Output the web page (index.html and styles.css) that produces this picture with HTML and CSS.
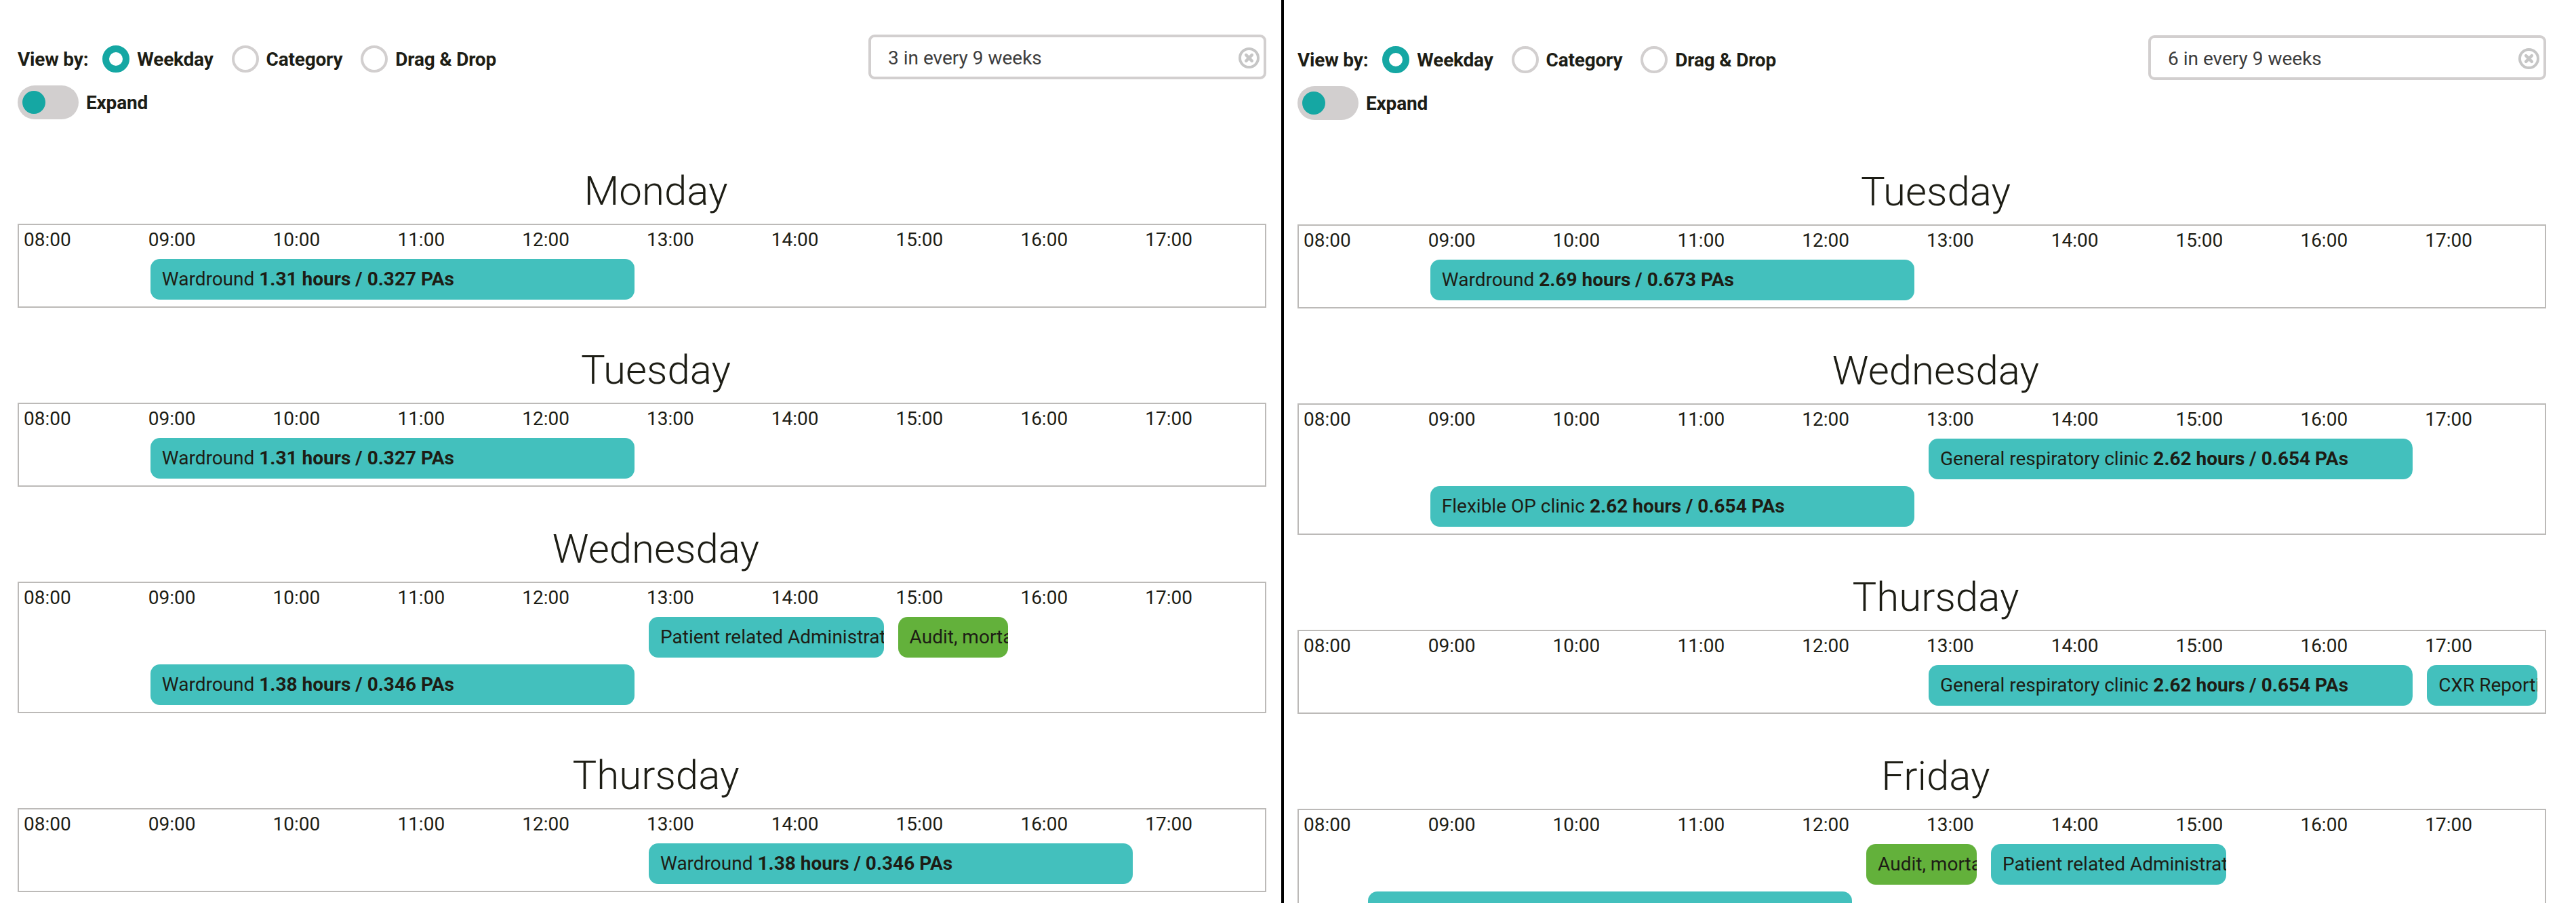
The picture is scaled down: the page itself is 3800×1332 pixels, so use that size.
FILE: index.html
```html
<!DOCTYPE html>
<html lang="en">
<head>
<meta charset="utf-8">
<title>Job plan – weekday view</title>
<link rel="stylesheet" href="styles.css">
</head>
<body>
<div class="page">
  <section class="panel panel-left">
    <div class="panel-inner">
      <header class="toolbar">
        <div class="controls">
          <div class="viewby">
            <span class="viewby-label">View by:</span>
            <label class="radio"><span class="radio-dot checked"></span><span>Weekday</span></label>
            <label class="radio"><span class="radio-dot"></span><span>Category</span></label>
            <label class="radio"><span class="radio-dot"></span><span>Drag &amp; Drop</span></label>
          </div>
          <div class="expand">
            <span class="toggle"><span class="knob"></span></span>
            <span class="expand-label">Expand</span>
          </div>
        </div>
        <div class="search">
          <span class="search-text">3 in every 9 weeks</span>
          <svg class="clear" viewBox="0 0 31 31" width="31" height="31"><circle cx="15.5" cy="15.5" r="13.5"/><path d="M11.2 11.2 L19.8 19.8 M19.8 11.2 L11.2 19.8"/></svg>
        </div>
      </header>

      <div class="day">
        <h2 class="day-title">Monday</h2>
        <div class="timeline">
          <div class="hour">08:00</div><div class="hour">09:00</div><div class="hour">10:00</div><div class="hour">11:00</div><div class="hour">12:00</div><div class="hour">13:00</div><div class="hour">14:00</div><div class="hour">15:00</div><div class="hour">16:00</div><div class="hour">17:00</div>
          <div class="event teal" style="grid-column: 3 / 11; grid-row: 2;">Wardround <b>1.31 hours / 0.327 PAs</b></div>
        </div>
      </div>

      <div class="day">
        <h2 class="day-title">Tuesday</h2>
        <div class="timeline">
          <div class="hour">08:00</div><div class="hour">09:00</div><div class="hour">10:00</div><div class="hour">11:00</div><div class="hour">12:00</div><div class="hour">13:00</div><div class="hour">14:00</div><div class="hour">15:00</div><div class="hour">16:00</div><div class="hour">17:00</div>
          <div class="event teal" style="grid-column: 3 / 11; grid-row: 2;">Wardround <b>1.31 hours / 0.327 PAs</b></div>
        </div>
      </div>

      <div class="day">
        <h2 class="day-title">Wednesday</h2>
        <div class="timeline">
          <div class="hour">08:00</div><div class="hour">09:00</div><div class="hour">10:00</div><div class="hour">11:00</div><div class="hour">12:00</div><div class="hour">13:00</div><div class="hour">14:00</div><div class="hour">15:00</div><div class="hour">16:00</div><div class="hour">17:00</div>
          <div class="event teal" style="grid-column: 11 / 15; grid-row: 2;">Patient related Administration</div>
          <div class="event green" style="grid-column: 15 / 17; grid-row: 2;">Audit, mortality</div>
          <div class="event teal" style="grid-column: 3 / 11; grid-row: 3;">Wardround <b>1.38 hours / 0.346 PAs</b></div>
        </div>
      </div>

      <div class="day">
        <h2 class="day-title">Thursday</h2>
        <div class="timeline">
          <div class="hour">08:00</div><div class="hour">09:00</div><div class="hour">10:00</div><div class="hour">11:00</div><div class="hour">12:00</div><div class="hour">13:00</div><div class="hour">14:00</div><div class="hour">15:00</div><div class="hour">16:00</div><div class="hour">17:00</div>
          <div class="event teal" style="grid-column: 11 / 19; grid-row: 2;">Wardround <b>1.38 hours / 0.346 PAs</b></div>
        </div>
      </div>
    </div>
  </section>

  <div class="divider"></div>

  <section class="panel panel-right">
    <div class="panel-inner">
      <header class="toolbar">
        <div class="controls">
          <div class="viewby">
            <span class="viewby-label">View by:</span>
            <label class="radio"><span class="radio-dot checked"></span><span>Weekday</span></label>
            <label class="radio"><span class="radio-dot"></span><span>Category</span></label>
            <label class="radio"><span class="radio-dot"></span><span>Drag &amp; Drop</span></label>
          </div>
          <div class="expand">
            <span class="toggle"><span class="knob"></span></span>
            <span class="expand-label">Expand</span>
          </div>
        </div>
        <div class="search">
          <span class="search-text">6 in every 9 weeks</span>
          <svg class="clear" viewBox="0 0 31 31" width="31" height="31"><circle cx="15.5" cy="15.5" r="13.5"/><path d="M11.2 11.2 L19.8 19.8 M19.8 11.2 L11.2 19.8"/></svg>
        </div>
      </header>

      <div class="day">
        <h2 class="day-title">Tuesday</h2>
        <div class="timeline">
          <div class="hour">08:00</div><div class="hour">09:00</div><div class="hour">10:00</div><div class="hour">11:00</div><div class="hour">12:00</div><div class="hour">13:00</div><div class="hour">14:00</div><div class="hour">15:00</div><div class="hour">16:00</div><div class="hour">17:00</div>
          <div class="event teal" style="grid-column: 3 / 11; grid-row: 2;">Wardround <b>2.69 hours / 0.673 PAs</b></div>
        </div>
      </div>

      <div class="day">
        <h2 class="day-title">Wednesday</h2>
        <div class="timeline">
          <div class="hour">08:00</div><div class="hour">09:00</div><div class="hour">10:00</div><div class="hour">11:00</div><div class="hour">12:00</div><div class="hour">13:00</div><div class="hour">14:00</div><div class="hour">15:00</div><div class="hour">16:00</div><div class="hour">17:00</div>
          <div class="event teal" style="grid-column: 11 / 19; grid-row: 2;">General respiratory clinic <b>2.62 hours / 0.654 PAs</b></div>
          <div class="event teal" style="grid-column: 3 / 11; grid-row: 3;">Flexible OP clinic <b>2.62 hours / 0.654 PAs</b></div>
        </div>
      </div>

      <div class="day">
        <h2 class="day-title">Thursday</h2>
        <div class="timeline">
          <div class="hour">08:00</div><div class="hour">09:00</div><div class="hour">10:00</div><div class="hour">11:00</div><div class="hour">12:00</div><div class="hour">13:00</div><div class="hour">14:00</div><div class="hour">15:00</div><div class="hour">16:00</div><div class="hour">17:00</div>
          <div class="event teal" style="grid-column: 11 / 19; grid-row: 2;">General respiratory clinic <b>2.62 hours / 0.654 PAs</b></div>
          <div class="event teal" style="grid-column: 19 / 21; grid-row: 2;">CXR Reporting</div>
        </div>
      </div>

      <div class="day">
        <h2 class="day-title">Friday</h2>
        <div class="timeline">
          <div class="hour">08:00</div><div class="hour">09:00</div><div class="hour">10:00</div><div class="hour">11:00</div><div class="hour">12:00</div><div class="hour">13:00</div><div class="hour">14:00</div><div class="hour">15:00</div><div class="hour">16:00</div><div class="hour">17:00</div>
          <div class="event green" style="grid-column: 10 / 12; grid-row: 2;">Audit, mortality</div>
          <div class="event teal" style="grid-column: 12 / 16; grid-row: 2;">Patient related Administration</div>
          <div class="event teal" style="grid-column: 2 / 10; grid-row: 3;">Wardround <b>2.62 hours / 0.654 PAs</b></div>
        </div>
      </div>
    </div>
  </section>
</div>
</body>
</html>
```

FILE: styles.css
```css
html, body {
  margin: 0;
  padding: 0;
  background: #ffffff;
}

body {
  font-family: Roboto, "Liberation Sans", Arial, sans-serif;
  color: #1d1d15;
  font-size: 28px;
}

.page {
  display: flex;
  align-items: stretch;
  min-height: 100vh;
}

.panel {
  box-sizing: border-box;
  flex: none;
}

.panel-left {
  width: 1890px;
  padding: 51px 22px 0 26px;
}

.panel-right {
  flex: 1;
  padding: 52px 0 0 20px;
}

.panel-inner {
  width: 1842px;
}

.divider {
  flex: none;
  width: 4px;
  background: #000000;
}

/* ---------- toolbar ---------- */
.toolbar {
  display: flex;
  justify-content: space-between;
  align-items: flex-start;
  padding-bottom: 14px;
}

.controls {
  display: flex;
  flex-direction: column;
}

.viewby {
  display: flex;
  align-items: center;
  height: 72px;
  font-weight: 700;
  letter-spacing: -0.2px;
}

.viewby-label {
  margin-right: 21px;
}

.radio {
  display: flex;
  align-items: center;
  gap: 11px;
  margin-right: 27px;
}

.radio-dot {
  box-sizing: border-box;
  width: 40px;
  height: 40px;
  border-radius: 50%;
  border: 4px solid #d2cfcf;
  background: #ffffff;
}

.radio-dot.checked {
  border: 10px solid #15a7a3;
}

.expand {
  display: flex;
  align-items: center;
  gap: 11px;
  margin-top: 3px;
  height: 50px;
  font-weight: 700;
  letter-spacing: -0.2px;
}

.toggle {
  box-sizing: border-box;
  display: flex;
  align-items: center;
  width: 90px;
  height: 50px;
  border-radius: 25px;
  background: #d2cfcf;
  padding-left: 7px;
}

.knob {
  width: 34px;
  height: 34px;
  border-radius: 50%;
  background: #15a7a3;
}

.search {
  box-sizing: border-box;
  display: flex;
  align-items: center;
  width: 587px;
  height: 66px;
  border: 4px solid #d2cfcf;
  border-radius: 9px;
  padding: 2px 6px 0 25px;
  background: #ffffff;
}

.search-text {
  flex: 1;
  color: #3d3d3d;
  font-weight: 400;
}

.clear {
  display: block;
  fill: none;
  stroke: #c6c6c6;
  stroke-width: 4;
  stroke-linecap: round;
}

.clear path {
  stroke-width: 4.5;
}

/* ---------- days ---------- */
.day {
  margin-top: 55px;
}

.day-title {
  margin: 0 0 11px;
  padding-left: 41px;
  text-align: center;
  font-size: 60px;
  line-height: 74px;
  font-weight: 300;
  color: #1d1d15;
}

.timeline {
  display: grid;
  grid-template-columns: repeat(20, 1fr);
  grid-template-rows: 40px;
  grid-auto-rows: 60px;
  row-gap: 10px;
  border: 2px solid #bcbab8;
  padding-bottom: 10px;
  background: #ffffff;
}

.hour {
  grid-row: 1;
  grid-column: span 2;
  padding: 5px 0 0 7px;
  line-height: 33px;
  font-weight: 400;
  white-space: nowrap;
}

.event {
  margin: 0 11px 0 10px;
  padding-left: 17px;
  border-radius: 14px;
  line-height: 60px;
  white-space: nowrap;
  overflow: hidden;
  font-weight: 400;
  color: #1d1d15;
}

.event b {
  font-weight: 700;
}

.event.teal {
  background: #43c0bd;
}

.event.green {
  background: #63b13b;
}
```
